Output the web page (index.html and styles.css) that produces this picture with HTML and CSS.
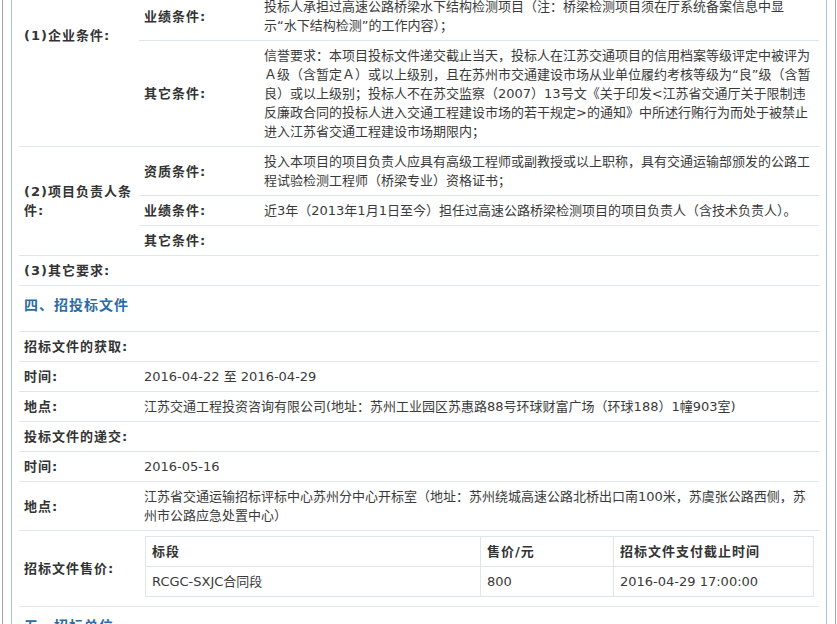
FILE: index.html
```html
<!DOCTYPE html>
<html lang="zh-CN">
<head>
<meta charset="utf-8">
<title>招标公告</title>
<link rel="stylesheet" href="styles.css">
</head>
<body>
<div class="frame">
  <div class="panel">
    <table class="info">
      <colgroup><col class="c-label"><col class="c-sub"><col></colgroup>
      <tbody>
        <tr><td colspan="3" class="sec">三、投标人资格要求</td></tr>
        <tr>
          <th rowspan="3" class="lbl">(1)企业条件:</th>
          <th class="lbl">资质条件:</th>
          <td class="txt">具有交通运输部颁发的公路工程综合甲级试验检测资质，或同时具有公路工程桥梁隧道工程专项<br>检测资质；具有有效的计量认证证书；投标人须在江苏省交通运输厅公路水运工程试验检测<br>机构信用信息中登记备案；</td>
        </tr>
        <tr>
          <th class="lbl">业绩条件:</th>
          <td class="txt">投标人承担过高速公路桥梁水下结构检测项目（注：桥梁检测项目须在厅系统备案信息中显<br>示“水下结构检测”的工作内容）；</td>
        </tr>
        <tr>
          <th class="lbl">其它条件:</th>
          <td class="txt">信誉要求：本项目投标文件递交截止当天，投标人在江苏交通项目的信用档案等级评定中被评为<br>Ａ级（含暂定Ａ）或以上级别，且在苏州市交通建设市场从业单位履约考核等级为“良”级（含暂<br>良）或以上级别；投标人不在苏交监察（2007）13号文《关于印发&lt;江苏省交通厅关于限制违<br>反廉政合同的投标人进入交通工程建设市场的若干规定&gt;的通知》中所述行贿行为而处于被禁止<br>进入江苏省交通工程建设市场期限内；</td>
        </tr>
        <tr>
          <th rowspan="3" class="lbl">(2)项目负责人条<br>件:</th>
          <th class="lbl">资质条件:</th>
          <td class="txt">投入本项目的项目负责人应具有高级工程师或副教授或以上职称，具有交通运输部颁发的公路工<br>程试验检测工程师（桥梁专业）资格证书；</td>
        </tr>
        <tr>
          <th class="lbl">业绩条件:</th>
          <td class="txt">近3年（2013年1月1日至今）担任过高速公路桥梁检测项目的项目负责人（含技术负责人）。</td>
        </tr>
        <tr>
          <th class="lbl">其它条件:</th>
          <td class="txt"></td>
        </tr>
        <tr>
          <th class="lbl">(3)其它要求:</th>
          <td colspan="2" class="txt"></td>
        </tr>

        <tr><td colspan="3" class="sec">四、招投标文件</td></tr>
        <tr>
          <th class="lbl">招标文件的获取:</th>
          <td colspan="2" class="txt"></td>
        </tr>
        <tr>
          <th class="lbl">时间:</th>
          <td colspan="2" class="txt">2016-04-22 至 2016-04-29</td>
        </tr>
        <tr>
          <th class="lbl">地点:</th>
          <td colspan="2" class="txt">江苏交通工程投资咨询有限公司(地址：苏州工业园区苏惠路88号环球财富广场（环球188）1幢903室)</td>
        </tr>
        <tr>
          <th class="lbl">投标文件的递交:</th>
          <td colspan="2" class="txt"></td>
        </tr>
        <tr>
          <th class="lbl">时间:</th>
          <td colspan="2" class="txt">2016-05-16</td>
        </tr>
        <tr>
          <th class="lbl">地点:</th>
          <td colspan="2" class="txt">江苏省交通运输招标评标中心苏州分中心开标室（地址：苏州绕城高速公路北桥出口南100米，苏虞张公路西侧，苏<br>州市公路应急处置中心）</td>
        </tr>
        <tr>
          <th class="lbl">招标文件售价:</th>
          <td colspan="2" class="txt price-cell">
            <table class="price">
              <colgroup><col class="p-seg"><col class="p-cost"><col></colgroup>
              <thead>
                <tr><th>标段</th><th>售价/元</th><th>招标文件支付截止时间</th></tr>
              </thead>
              <tbody>
                <tr><td>RCGC-SXJC合同段</td><td>800</td><td>2016-04-29 17:00:00</td></tr>
              </tbody>
            </table>
          </td>
        </tr>

        <tr><td colspan="3" class="sec">五、招标单位</td></tr>
        <tr>
          <th class="lbl">招标人:</th>
          <td colspan="2" class="txt">苏州绕城高速公路有限公司</td>
        </tr>
        <tr>
          <th class="lbl">招标代理:</th>
          <td colspan="2" class="txt">江苏交通工程投资咨询有限公司</td>
        </tr>
        <tr>
          <th class="lbl">联系电话:</th>
          <td colspan="2" class="txt">0512-62620000</td>
        </tr>
      </tbody>
    </table>
  </div>
</div>
</body>
</html>
```

FILE: styles.css
```css
* {
  box-sizing: border-box;
}

html,
body {
  margin: 0;
  padding: 0;
  background: #ffffff;
}

body {
  font-family: "DejaVu Sans", "Noto Sans CJK SC", sans-serif;
  font-size: 13px;
  line-height: 19px;
  color: #333333;
}

/* outer grey frame, page is scrolled so its top is out of view */
.frame {
  margin: -139px 1px 0 2px;
  padding: 8px;
  border: 1px solid #a3a3a3;
}

.panel {
  padding: 7px;
  border: 1px solid #aac5d8;
}

.info {
  width: 100%;
  border-collapse: collapse;
  table-layout: fixed;
}

.c-label,
.c-sub {
  width: 120px;
}

.info > tbody > tr > th,
.info > tbody > tr > td {
  padding: 5px;
  border-bottom: 1px solid #dfe5e8;
  text-align: left;
  vertical-align: middle;
  line-height: 19px;
}

.lbl {
  font-weight: bold;
  letter-spacing: 1px;
  color: #333333;
}

.txt {
  white-space: nowrap;
  color: #3a3a3a;
}

.info > tbody > tr > td.sec {
  padding: 8px 5px 15px;
  line-height: 22px;
  font-size: 14px;
  font-weight: bold;
  letter-spacing: 1px;
  color: #2c6ca4;
}

.info > tbody > tr > td.price-cell {
  padding-left: 6px;
}

.price {
  width: 100%;
  border-collapse: collapse;
  table-layout: fixed;
  margin-bottom: 4px;
}

.p-seg {
  width: 335px;
}

.p-cost {
  width: 133px;
}

.price th,
.price td {
  border: 1px solid #dfe5e8;
  padding: 5px 6px;
  line-height: 19px;
  text-align: left;
}

.price th {
  font-weight: bold;
  letter-spacing: 1px;
  color: #333333;
}
```
